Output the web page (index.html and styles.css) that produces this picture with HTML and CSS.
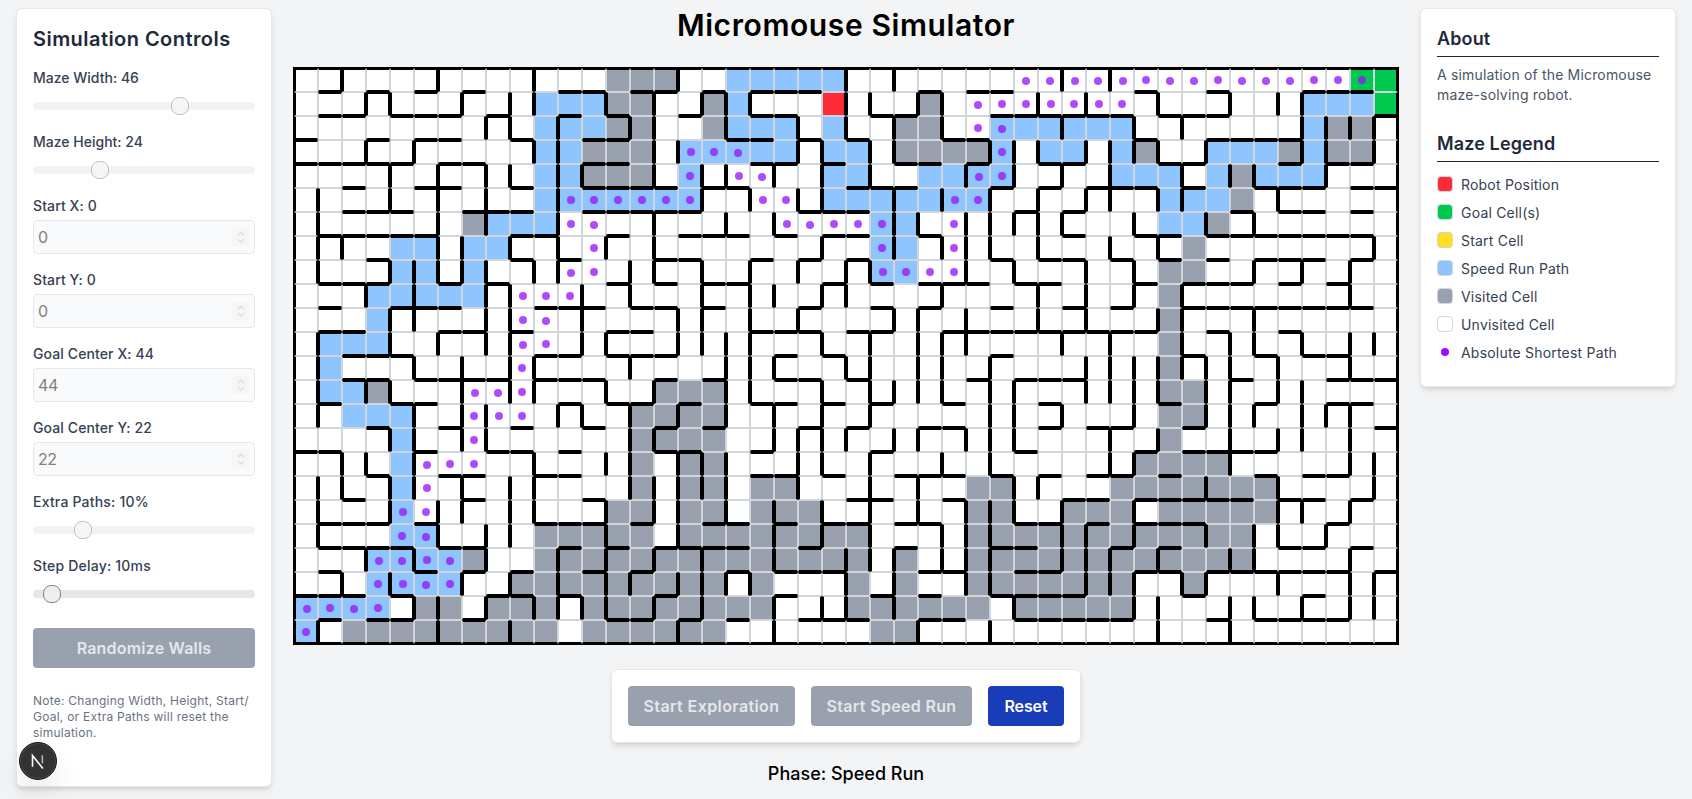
FILE: index.html
```
<!DOCTYPE html>
<html lang="en">
<head>
<meta charset="utf-8">
<title>Micromouse Simulator</title>
<link rel="stylesheet" href="styles.css">
</head>
<body>
<div class="page">
  <aside class="panel controls">
    <h2 class="controls-title">Simulation Controls</h2>
    <div class="field field-range"><label class="plain">Maze Width: 46</label><div class="range is-off"><i class="thumb" style="margin-left:138px"></i></div></div>
    <div class="field field-range"><label class="plain">Maze Height: 24</label><div class="range is-off"><i class="thumb" style="margin-left:58px"></i></div></div>
    <div class="field field-number"><label>Start X: 0</label><div class="number"><span>0</span><svg class="spin" viewBox="0 0 18 18"><path d="M6 7.2 9 4.2l3 3M6 11.2l3 3 3-3"/></svg></div></div>
    <div class="field field-number"><label>Start Y: 0</label><div class="number"><span>0</span><svg class="spin" viewBox="0 0 18 18"><path d="M6 7.2 9 4.2l3 3M6 11.2l3 3 3-3"/></svg></div></div>
    <div class="field field-number"><label>Goal Center X: 44</label><div class="number"><span>44</span><svg class="spin" viewBox="0 0 18 18"><path d="M6 7.2 9 4.2l3 3M6 11.2l3 3 3-3"/></svg></div></div>
    <div class="field field-number"><label>Goal Center Y: 22</label><div class="number"><span>22</span><svg class="spin" viewBox="0 0 18 18"><path d="M6 7.2 9 4.2l3 3M6 11.2l3 3 3-3"/></svg></div></div>
    <div class="field field-range"><label class="loose">Extra Paths: 10%</label><div class="range is-off"><i class="thumb" style="margin-left:41px"></i></div></div>
    <div class="field field-range"><label class="loose">Step Delay: 10ms</label><div class="range"><i class="thumb" style="margin-left:10px"></i></div></div>
    <button class="btn btn-off btn-wide">Randomize Walls</button>
    <p class="note">Note: Changing Width, Height, Start/<br>Goal, or Extra Paths will reset the<br>simulation.</p>
  </aside>

  <main class="stage">
    <h1 class="title">Micromouse Simulator</h1>
    <div class="maze" id="maze"></div>
    <div class="panel actions">
      <button class="btn btn-off btn-explore">Start Exploration</button>
      <button class="btn btn-off btn-speed">Start Speed Run</button>
      <button class="btn btn-reset">Reset</button>
    </div>
    <p class="phase">Phase: Speed Run</p>
  </main>

  <aside class="panel info">
    <h3 class="info-title">About</h3>
    <p class="about">A simulation of the Micromouse<br>maze-solving robot.</p>
    <h3 class="info-title">Maze Legend</h3>
    <ul class="legend">
      <li><i class="swatch robot"></i><span>Robot Position</span></li>
      <li><i class="swatch goal"></i><span>Goal Cell(s)</span></li>
      <li><i class="swatch start"></i><span>Start Cell</span></li>
      <li><i class="swatch path"></i><span>Speed Run Path</span></li>
      <li><i class="swatch visited"></i><span>Visited Cell</span></li>
      <li><i class="swatch"></i><span>Unvisited Cell</span></li>
      <li><i class="swatch-dot"></i><span>Absolute Shortest Path</span></li>
    </ul>
  </aside>
</div>
<div class="badge"><svg viewBox="0 0 38 38"><path d="M13.2 25V13.3L24.2 27" class="n-main"/><path d="M23.6 13v8.5" class="n-side"/></svg></div>
<script src="maze.js"></script>
</body>
</html>
```
FILE: styles.css
```
* { box-sizing: border-box; }
body {
  margin: 0;
  background: #f3f4f6;
  color: #000;
  font-family: Inter, "Noto Sans", sans-serif;
}
h1, h2, h3, p, ul { margin: 0; padding: 0; }
.page {
  display: flex;
  justify-content: space-between;
  align-items: flex-start;
  height: 799px;
  padding: 8px 16px 0;
  overflow: hidden;
}
.panel {
  background: #fff;
  border: 1px solid #e5e7eb;
  border-radius: 6px;
  box-shadow: 0 4px 6px -1px rgba(0,0,0,.1), 0 2px 4px -2px rgba(0,0,0,.1);
}
.controls { width: 256px; height: 779px; padding: 16px; }
.controls-title {
  height: 28px;
  margin: 0 0 15px;
  font-size: 20px;
  line-height: 28px;
  font-weight: 600;
  letter-spacing: .45px;
  color: #1e2939;
  white-space: nowrap;
}
.field label {
  display: block;
  height: 20px;
  font-size: 14px;
  line-height: 20px;
  font-weight: 500;
  letter-spacing: .1px;
  color: #364153;
}
.field .plain { letter-spacing: 0; }
.field .loose { letter-spacing: .2px; }
.field-range { height: 64px; }
.field-number { height: 74px; }
.range {
  display: flex;
  align-items: center;
  height: 8px;
  margin-top: 14px;
  border-radius: 4px;
  background: #e5e7eb;
}
.range.is-off { opacity: .5; }
.thumb {
  width: 18px;
  height: 18px;
  border: 1px solid #858585;
  border-radius: 8px;
  background: #efefef;
}
.number {
  display: flex;
  justify-content: space-between;
  align-items: center;
  height: 34px;
  margin-top: 4px;
  padding: 0 4px;
  border: 1px solid #e5e7eb;
  border-radius: 4px;
  background: #f9fafb;
  color: #7f7f7f;
  font-size: 16px;
  letter-spacing: -.4px;
}
.spin { width: 18px; height: 18px; background: #f6f6f6; }
.spin path { fill: none; stroke: #dcdcdc; stroke-width: 1.3; }
.btn {
  height: 40px;
  padding: 0;
  border: 0;
  border-radius: 4px;
  font: 600 16px/24px Inter, "Noto Sans", sans-serif;
  letter-spacing: .2px;
  color: #fff;
}
.btn-off { background: #99a1af; color: #e5e7eb; }
.btn-wide { display: block; width: 222px; margin-top: 8px; }
.note {
  margin-top: 25px;
  font-size: 12px;
  line-height: 16px;
  letter-spacing: .24px;
  color: #6a7282;
  white-space: nowrap;
}
.stage { display: flex; flex-direction: column; align-items: center; }
.title {
  height: 59px;
  font-size: 30px;
  line-height: 34px;
  font-weight: 600;
  letter-spacing: .6px;
  white-space: nowrap;
}
.maze {
  display: grid;
  grid-template-columns: repeat(46, 24px);
  grid-auto-rows: 24px;
  border: 1px solid #000;
}
.cell {
  display: flex;
  align-items: center;
  justify-content: center;
  border: 1px solid #d1d5dc;
  background: #fff;
}
.wt { border-top: 2px solid #000; }
.wr { border-right: 2px solid #000; }
.wb { border-bottom: 2px solid #000; }
.wl { border-left: 2px solid #000; }
.path { background: #8ec5ff; }
.visited { background: #99a1af; }
.robot { background: #fb2c36; }
.goal { background: #00c950; }
.start { background: #ffdf20; }
.dot { width: 8px; height: 8px; border-radius: 50%; background: #9810fa; opacity: .75; }
.actions {
  display: flex;
  gap: 16px;
  margin-top: 24px;
  padding: 16px;
}
.btn-explore { width: 167px; letter-spacing: .4px; }
.btn-speed { width: 161px; letter-spacing: .32px; }
.btn-reset { width: 76px; letter-spacing: -.1px; background: #193cb8; }
.phase { margin-top: 17px; font-size: 18px; line-height: 28px; font-weight: 500; }
.info { width: 256px; height: 379px; padding: 16px; }
.info-title {
  height: 32px;
  border-bottom: 1px solid #1e2939;
  font-size: 18px;
  line-height: 28px;
  font-weight: 600;
  letter-spacing: .12px;
  color: #1e2939;
}
.about {
  height: 73px;
  padding-top: 8px;
  font-size: 14px;
  line-height: 20px;
  letter-spacing: .17px;
  color: #4a5565;
  white-space: nowrap;
}
.legend { list-style: none; padding-top: 12px; }
.legend li {
  display: flex;
  align-items: center;
  gap: 8px;
  height: 20px;
  margin-bottom: 8px;
  font-size: 14px;
  letter-spacing: .2px;
  color: #364153;
}
.swatch { width: 16px; height: 16px; border: 1px solid #d1d5dc; border-radius: 4px; }
.swatch-dot { width: 8px; height: 8px; margin: 0 4px; border-radius: 50%; background: #9810fa; }
.badge {
  position: absolute;
  left: 19px;
  top: 742px;
  width: 38px;
  height: 38px;
  border: 1px solid #171717;
  border-radius: 50%;
  background: #333;
  box-shadow: inset 0 0 0 1px #4a4a4a, 0 16px 32px -8px rgba(0,0,0,.24);
}
.badge svg { display: block; width: 36px; height: 36px; }
.n-main { fill: none; stroke: #fff; stroke-width: 1.7; }
.n-side { fill: none; stroke: #bbb; stroke-width: 1.6; }
```
FILE: maze.js
```
// Each row is split into blocks of 12 columns; positions in a block are single base-13 digits.
const BLOCK = 12, COLS = 46, ROWS = 24;

// Walls on the horizontal grid lines 1..23.
const H = [
  '1357b|0235789|245b|2678', '124568b|1478|0156789a|0129', '03569|01679b|34b|2345', '0123467|0178a|12478|01578',
  '2569|012356b|01579ab|145689', '234789|012349ab|68|3568', '123459a|14568ab|28b|02345678', '39b|3479b|578a|024568',
  '12368|1356a|023467b|12357', '1456ab|02359|0258a|12345678', '12679|12789b|03456789ab|25', '234ab|1238a|5|1467',
  '235678ab|03589b|4678|3789', '145b|12478a|037|0478', '369|0359b|2379a|19', '01589b|347|06b|1234',
  '367ab|78a|123579a|0467', '27|0b|0389b|0123568', '1235ab|02568ab|12679b|017', '123467b|134569|156a|0568',
  '1579|02689a|2367b|02345679', '012489b|38|025678|16', '1347|12469ab|236789a|24567'
];

// Walls on the vertical grid lines of rows 0..23.
const V = [
  '26a|4b|18a|', '3479a|13567bc|2379c|0356', '89b|2369b|138b|16789', '35ab|349ac|15679abc|02679',
  '4689bc|03568ac|468a|1347', '1468b|579a|13579ac|015', '168b|368|1245678b|24', '12679b|13a|13457ac|09',
  '145678ab|23579bc|469b|468', '3589c|02578ab|379b|18', '4589c|04579|12479c|014', '14689c|014567ac|02348a|134689',
  '1579a|2678bc|02359abc|012358', '13479a|1367ac|0123569abc|02356', '1578bc|02468ac|0568b|234678', '4578|2389ab|12456ac|03568',
  '235a|124569ac|035ab|389', '124579a|234569c|0267|259', '14679a|13468ac|024568b|568', '1689|148ac|034589b|2457',
  '358b|1358bc|0134589ac|0348', '2479b|124567b|1459ab|12589', '568abc|01358ab|16bc|034689', '169|48|25c|03'
];

// Cell fills: p = speed run path, v = visited, r = robot, g = goal.
const FILL = [
  '|v123p6789a||g89', 'pab|p06v125ra|v2|p678g9', 'pab|p0678av125|v12p56789a|p6v78', 'pab|v012p45678ab|v1234bp578a|p2346v578',
  'pab|v012p4ab|p2345ab|p02456v3', 'pab|p01234ab|p01234|p012v3', 'v7p89a||p01|p01v2', 'p4578||p01|v1',
  'p457||p01|v01', 'p34567|||v0', 'p3|||v0', 'p123|||v0',
  'p1|||v0', 'p12v3|v345||v01', 'p234|v2345||v01', 'p4|v2345||v0',
  'p4|v245|vb|v012', 'p4|v24578|v45ab|v01234', 'p4|v1245789|v4589a|v01234', 'p45vab|v012456789ab|v456789ab|v0123',
  'p3456v7ab|v0123456789ab|v1456789ab|v0123', 'p3456v9ab|v0123457b|v1456789a|v1', 'p0123v5689a|v01234567b|v012346789a|', 'p0v23456789a|v012345|v01|'
];

// Cells on the absolute shortest path.
const DOTS = [
  '||6789ab|012345678', '||456789a|', '||45|', '|456|5|', '|467|45|', 'b|0123478|34|', 'b|089ab|03|', '|0|03|',
  'b|0|0123|', '9ab|||', '9a|||', '9a|||', '9|||', '789|||', '789|||', '7|||', '567|||', '5|||', '45|||', '45|||',
  '3456|||', '3456|||', '0123|||', '0|||'
];

const KINDS = { p: 'path', v: 'visited', r: 'robot', g: 'goal' };

function expand(line) {
  const out = {};
  line.split('|').forEach((block, b) => {
    let kind = true;
    for (const ch of block) {
      if (KINDS[ch]) kind = KINDS[ch];
      else out[b * BLOCK + parseInt(ch, 13)] = kind;
    }
  });
  return out;
}

const h = H.map(expand), v = V.map(expand), fill = FILL.map(expand), dots = DOTS.map(expand);
const maze = document.getElementById('maze');
for (let r = 0; r < ROWS; r++) {
  for (let c = 0; c < COLS; c++) {
    const cell = document.createElement('div');
    const names = ['cell'];
    if (r === 0 || h[r - 1][c]) names.push('wt');
    if (c === COLS - 1 || v[r][c + 1]) names.push('wr');
    if (r === ROWS - 1 || h[r][c]) names.push('wb');
    if (c === 0 || v[r][c]) names.push('wl');
    if (fill[r][c]) names.push(fill[r][c]);
    cell.className = names.join(' ');
    if (dots[r][c]) {
      const dot = document.createElement('i');
      dot.className = 'dot';
      cell.append(dot);
    }
    maze.append(cell);
  }
}
```
